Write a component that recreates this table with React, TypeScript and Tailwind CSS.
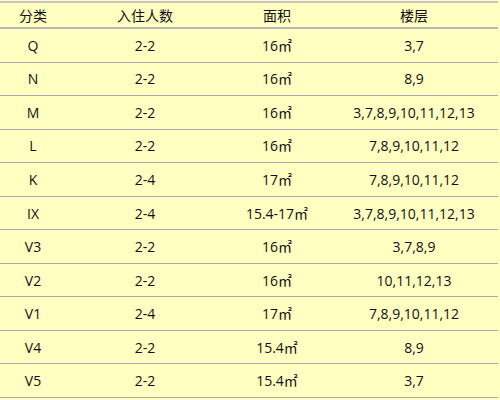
const rows = [
  ["Q", "2-2", "16㎡", "3,7"],
  ["N", "2-2", "16㎡", "8,9"],
  ["M", "2-2", "16㎡", "3,7,8,9,10,11,12,13"],
  ["L", "2-2", "16㎡", "7,8,9,10,11,12"],
  ["K", "2-4", "17㎡", "7,8,9,10,11,12"],
  ["IX", "2-4", "15.4-17㎡", "3,7,8,9,10,11,12,13"],
  ["V3", "2-2", "16㎡", "3,7,8,9"],
  ["V2", "2-2", "16㎡", "10,11,12,13"],
  ["V1", "2-4", "17㎡", "7,8,9,10,11,12"],
  ["V4", "2-2", "15.4㎡", "8,9"],
  ["V5", "2-2", "15.4㎡", "3,7"],
];

const cols = "grid grid-cols-[66px_158px_106px_168px] w-[498px]";

export default function App() {
  return (
    <div
      className="h-[400px] w-[500px] bg-[#ffffc2] pt-px text-[14px] text-[#111]"
      style={{ fontFamily: '"Open Sans", "Noto Sans CJK SC", sans-serif' }}
    >
      <div className="w-[498px] border-t-2 border-[#c4c4c4]">
        <div className={`${cols} h-[26px] items-center border-b-2 border-[#b8b8b8]`}>
          <div className="text-center">分类</div>
          <div className="text-center">入住人数</div>
          <div className="text-center">面积</div>
          <div className="text-center">楼层</div>
        </div>
        {rows.map((r) => (
          <div
            key={r[0]}
            className={`${cols} h-[33.55px] items-center border-b border-[#aaaaaa]`}
          >
            {r.map((c, i) => (
              <div key={i} className="text-center">
                {c}
              </div>
            ))}
          </div>
        ))}
      </div>
    </div>
  );
}
